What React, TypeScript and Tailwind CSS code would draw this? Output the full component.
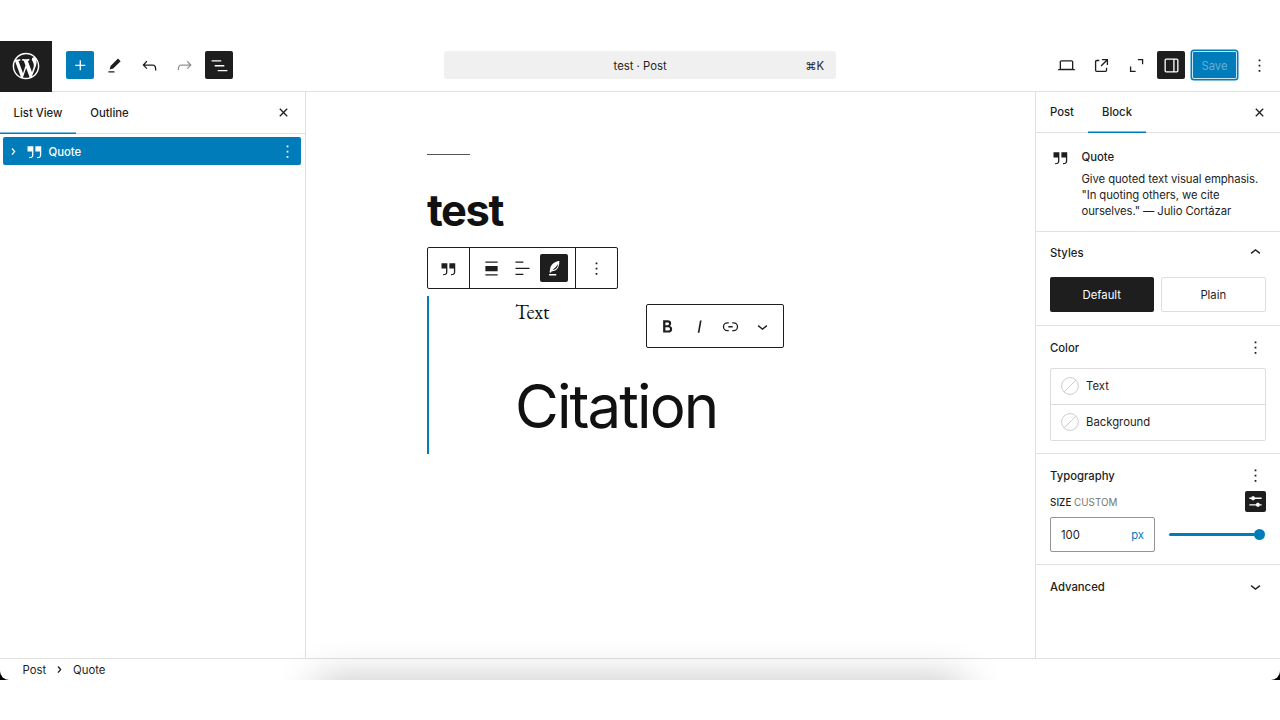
import React from 'react';

const icons = {
  wordpress:
    'M20 10c0-5.51-4.49-10-10-10C4.48 0 0 4.49 0 10c0 5.52 4.48 10 10 10 5.51 0 10-4.48 10-10zM7.78 15.37L4.37 6.22c.55-.02 1.17-.08 1.17-.08.5-.06.44-1.13-.06-1.11 0 0-1.45.11-2.37.11-.18 0-.37 0-.58-.01C4.12 2.69 6.87 1.11 10 1.11c2.33 0 4.45.87 6.05 2.34-.68-.11-1.65.39-1.65 1.58 0 .74.45 1.36.9 2.1.35.61.55 1.36.55 2.46 0 1.49-1.4 5-1.4 5l-3.03-8.37c.54-.02.82-.17.82-.17.5-.05.44-1.25-.06-1.22 0 0-1.44.12-2.38.12-.87 0-2.33-.12-2.33-.12-.5-.03-.56 1.2-.06 1.22l.92.08 1.26 3.41zM17.41 10c.24-.64.74-1.87.43-4.25.7 1.29 1.05 2.71 1.05 4.25 0 3.29-1.73 6.24-4.4 7.78.97-2.59 1.94-5.2 2.92-7.78zM6.1 18.09C3.12 16.65 1.11 13.53 1.11 10c0-1.3.23-2.48.72-3.59C3.25 10.3 4.67 14.2 6.1 18.09zm4.03-6.63l2.58 6.98c-.86.29-1.76.45-2.71.45-.79 0-1.57-.11-2.29-.33.81-2.38 1.62-4.74 2.42-7.1z',
  plus: 'M11 12.5V17.5H12.5V12.5H17.5V11H12.5V6H11V11H6V12.5H11Z',
  edit: 'm19 7-3-3-8.5 8.5-1 4 4-1L19 7Zm-7 11.5H5V20h7v-1.5Z',
  undo: 'M18.3 11.7c-.6-.6-1.4-.9-2.3-.9H6.7l2.9-3.3-1.1-1-4.5 5L8.5 16l1-1-2.7-2.7H16c.5 0 .9.2 1.3.5 1 1 1 3.4 1 4.5v.3h1.5v-.2c0-1.5 0-4.3-1.5-5.7z',
  redo: 'M15.6 6.5l-1.1 1 2.9 3.3H8c-.9 0-1.7.3-2.3.9-1.4 1.5-1.4 4.2-1.4 5.6v.2h1.5v-.3c0-1.1 0-3.5 1-4.5.3-.3.7-.5 1.3-.5h9.2L14.5 15l1.1 1.1 4.6-4.6-4.6-5z',
  listView: 'M3 6h11v1.5H3V6Zm3.5 5.5h11V13h-11v-1.5ZM21 17H10v1.5h11V17Z',
  quote:
    'M13 6v6h5.2v4c0 .8-.2 1.4-.5 1.7-.6.6-1.6.6-2.5.5h-.3v1.5h.5c1 0 2.3-.1 3.3-1 .6-.6 1-1.6 1-2.8V6H13zm-9 6h5.2v4c0 .8-.2 1.4-.5 1.7-.6.6-1.6.6-2.5.5h-.3v1.5h.5c1 0 2.3-.1 3.3-1 .6-.6 1-1.6 1-2.8V6H4v6z',
  more: 'M13 19h-2v-2h2v2zm0-6h-2v-2h2v2zm0-6h-2V5h2v2z',
  close:
    'M12 13.06l3.712 3.713 1.061-1.06L13.061 12l3.712-3.712-1.06-1.06L12 10.938 8.288 7.227l-1.061 1.06L10.939 12l-3.712 3.712 1.06 1.061L12 13.061z',
  desktop:
    'M20.5 16h-.7V8c0-1.1-.9-2-2-2H6.2c-1.1 0-2 .9-2 2v8h-.7c-.8 0-1.5.7-1.5 1.5h20c0-.8-.7-1.5-1.5-1.5zM5.7 8c0-.3.2-.5.5-.5h11.6c.3 0 .5.2.5.5v7.6H5.7V8z',
  external:
    'M19.5 4.5h-7V6h4.44l-5.97 5.97 1.06 1.06L18 7.06v4.44h1.5v-7Zm-13 1a2 2 0 0 0-2 2v10a2 2 0 0 0 2 2h10a2 2 0 0 0 2-2v-3H17v3a.5.5 0 0 1-.5.5h-10a.5.5 0 0 1-.5-.5v-10a.5.5 0 0 1 .5-.5h3V5.5h-3Z',
  expand: 'M13.5 4.5h6.2v6.2h-1.5V6h-4.7V4.5ZM4.5 13H6v5h5v1.5H4.5V13Z',
  sidebar:
    'M18 4H6c-1.1 0-2 .9-2 2v12c0 1.1.9 2 2 2h12c1.1 0 2-.9 2-2V6c0-1.1-.9-2-2-2zm-4 14.5H6c-.3 0-.5-.2-.5-.5V6c0-.3.2-.5.5-.5h8v13zm4.5-.5c0 .3-.2.5-.5.5h-2.5v-13H18c.3 0 .5.2.5.5v12z',
  alignNone: 'M19 5.5H5V4h14v1.5ZM19 20H5v-1.5h14V20ZM5 9h14v6H5V9Z',
  alignLeft: 'M13 5.5H4V4h9v1.5Zm7 7H4V11h16v1.5Zm-7 7H4V18h9v1.5Z',
  feather:
    'M17.6 3C11.6 4.2 7.2 8 7 12.8l-.7 3.6 1.5.4 1-1.7c5.6.2 8.800-3.500 8.800-12.100ZM16 6.800c-.2 4.200-2.300 6.600-6.300 6.800 1.300-1.400 4.500-3.400 6.300-6.800ZM5.800 18.300h8.200v1.700H5.800v-1.700Z',
  bold: 'M14.7 11.3c1-.6 1.5-1.6 1.5-3 0-2.3-1.3-3.4-4-3.4H7v14h5.8c1.4 0 2.5-.3 3.3-1 .8-.7 1.2-1.7 1.2-2.9.1-1.9-.8-3.1-2.6-3.7zm-5.1-4h2.3c.6 0 1.1.1 1.4.4.3.3.5.7.5 1.2s-.2 1-.5 1.2c-.3.3-.8.4-1.4.4H9.6V7.3zm4.6 9c-.4.3-1 .4-1.7.4H9.6v-3.9h2.9c.7 0 1.3.2 1.7.5.4.3.6.8.6 1.5s-.2 1.2-.6 1.5z',
  italic: 'M12.5 5L10 19h1.9l2.5-14z',
  link: 'M10 17.389H8.444A5.194 5.194 0 1 1 8.444 7H10v1.5H8.444a3.694 3.694 0 0 0 0 7.389H10v1.5ZM14 7h1.556a5.194 5.194 0 0 1 0 10.39H14v-1.5h1.556a3.694 3.694 0 0 0 0-7.39H14V7Zm-4.5 6h5v-1.5h-5V13Z',
  chevronDown: 'M17.5 11.6L12 16l-5.5-4.4.9-1.2L12 14l4.5-3.6 1 1.2z',
  chevronUp: 'M6.5 12.4L12 8l5.5 4.4-.9 1.2L12 10l-4.5 3.6-1-1.2z',
  chevronRight: 'M10.862 8.04L14.28 12.029L10.862 16.017L9.723 15.04L12.305 12.029L9.723 9.017L10.862 8.04Z',
  settings:
    'm19 7.5h-7.628c-.309-.874-1.142-1.5-2.122-1.5-.98 0-1.813.626-2.122 1.5h-2.128v1.5h2.128c.309.874 1.142 1.5 2.122 1.5.98 0 1.813-.626 2.122-1.5h7.628zM19 15h-2.128c-.309-.874-1.142-1.5-2.122-1.5s-1.813.626-2.122 1.5h-7.628v1.5h7.628c.309.874 1.142 1.5 2.122 1.5s1.813-.626 2.122-1.5h2.128z',
};

interface IconProps {
  name: keyof typeof icons;
  className?: string;
  viewBox?: string;
}

const Icon: React.FC<IconProps> = ({ name, className = 'size-[21px]', viewBox = '0 0 24 24' }) => (
  <svg viewBox={viewBox} fill="currentColor" className={`shrink-0 ${className}`}>
    <path d={icons[name]} />
  </svg>
);

interface IconButtonProps {
  name: keyof typeof icons;
  label: string;
  className?: string;
}

const IconButton: React.FC<IconButtonProps> = ({ name, label, className = '' }) => (
  <button
    type="button"
    aria-label={label}
    className={`flex size-7 shrink-0 items-center justify-center rounded-[2px] ${className}`}
  >
    <Icon name={name} />
  </button>
);

const Header = () => (
  <header className="flex h-[51px] shrink-0 items-start justify-between border-b border-[#e0e0e0]">
    <div className="flex">
      <div className="-mb-px mr-3.5 flex h-[51px] w-[52px] items-center justify-center bg-[#1e1e1e] pb-px text-white">
        <Icon name="wordpress" viewBox="-2 -2 24 24" className="size-[32px]" />
      </div>
      <div className="flex gap-[6.8px] pt-2.5">
        <IconButton name="plus" label="Add block" className="bg-[#007cba] text-white" />
        <IconButton name="edit" label="Tools" />
        <IconButton name="undo" label="Undo" />
        <IconButton name="redo" label="Redo" className="text-[#949494]" />
        <IconButton name="listView" label="Document overview" className="bg-[#1e1e1e] text-white" />
      </div>
    </div>

    <div className="-ml-[5px] mt-2.5 grid h-7 w-[392px] grid-cols-[1fr_auto_1fr] items-center rounded-[3px] bg-[#f0f0f0] px-3 pt-px">
      <span />
      <span>test · Post</span>
      <span className="text-right">⌘K</span>
    </div>

    <div className="flex items-center gap-[7px] pr-[7px] pt-2.5">
      <IconButton name="desktop" label="Preview" />
      <IconButton name="external" label="View post" />
      <IconButton name="expand" label="Zoom out" />
      <IconButton name="sidebar" label="Settings" className="bg-[#1e1e1e] text-white" />
      <button
        type="button"
        className="mr-px flex h-7 w-[45px] items-center justify-center rounded-[2px] bg-[#007cba] pt-px text-[#66b0d6] shadow-[inset_0_0_0_1px_#ffffffcc] ring-[1.5px] ring-[#007cba]"
      >
        Save
      </button>
      <IconButton name="more" label="Options" />
    </div>
  </header>
);

const ListViewPanel = () => (
  <aside className="flex w-[306px] shrink-0 flex-col border-r border-[#e0e0e0]">
    <div className="flex h-[42px] items-center justify-between border-b border-[#e0e0e0] pr-[8px] font-medium">
      <div className="flex h-[42px]">
        <button type="button" className="w-[76px] pt-px shadow-[inset_0_-1.5px_0_#007cba]">List View</button>
        <button type="button" className="w-[67px] pt-px">Outline</button>
      </div>
      <IconButton name="close" label="Close" />
    </div>
    <div className="mx-[3px] mt-[3px] flex h-[28px] w-[298px] items-center rounded-[2px] bg-[#007cba] font-medium text-white">
      <Icon name="chevronRight" />
      <Icon name="quote" className="size-[21px]" />
      <span className="ml-[3.5px] flex-1 pt-px">Quote</span>
      <Icon name="more" className="mr-[3px] size-[21px]" />
    </div>
  </aside>
);

const Canvas = () => (
  <main className="flex-1 pl-[121px] pt-[62px] text-[#111]">
    <div className="h-px w-[43px] bg-[#555]" />
    <h1 className="mt-[28px] text-[43.5px] font-bold leading-[54px] tracking-[-1.4px]">test</h1>

    <div className="mt-[10px] flex h-[42px] w-[191px] rounded-[2px] border border-[#1e1e1e] text-[#1e1e1e]">
      <div className="flex w-[42px] items-center justify-center border-r border-[#1e1e1e]">
        <Icon name="quote" />
      </div>
      <div className="flex flex-1 items-center justify-center gap-[3.5px] border-r border-[#1e1e1e]">
        <IconButton name="alignNone" label="Align" />
        <IconButton name="alignLeft" label="Align text" />
        <IconButton name="feather" label="Edit citation" className="bg-[#1e1e1e] text-white" />
      </div>
      <div className="flex w-[41px] items-center justify-center">
        <Icon name="more" />
      </div>
    </div>

    <blockquote className="mt-[7px] h-[158px] border-l-2 border-[#007cba] pl-[86px]">
      <div className="flex">
        <p className="w-[131px] pt-[4px] font-['EB_Garamond','Liberation_Serif',serif] text-[20.5px] leading-6">Text</p>
        <div className="mt-[8px] flex h-[44px] w-[138px] items-center justify-center gap-[3.4px] rounded-[2px] border border-[#1e1e1e] text-[#1e1e1e]">
          <IconButton name="bold" label="Bold" />
          <IconButton name="italic" label="Italic" />
          <IconButton name="link" label="Link" />
          <IconButton name="chevronDown" label="More" />
        </div>
      </div>
      <cite className="mt-[22px] block text-[60px] not-italic leading-[72px] tracking-[-1.9px]">Citation</cite>
    </blockquote>
  </main>
);

const colorRows = ['Text', 'Background'];

const BlockSettings = () => (
  <aside className="w-[245px] shrink-0 border-l border-[#e0e0e0]">
    <div className="flex h-[41px] items-center justify-between border-b border-[#e0e0e0] pr-[7px] font-medium">
      <div className="flex h-[41px]">
        <button type="button" className="w-[52px]">Post</button>
        <button type="button" className="w-[58px] shadow-[inset_0_-1.5px_0_#007cba]">Block</button>
      </div>
      <IconButton name="close" label="Close settings" />
    </div>

    <section className="flex h-[99px] gap-[10.5px] border-b border-[#e0e0e0] pl-[14px] pt-[14px]">
      <Icon name="quote" />
      <div className="pt-[2px]">
        <h2 className="font-medium leading-4">Quote</h2>
        <p className="mt-[6px] whitespace-nowrap leading-4 tracking-[-0.08px]">
          Give quoted text visual emphasis.
          <br />
          "In quoting others, we cite
          <br />
          ourselves." — Julio Cortázar
        </p>
      </div>
    </section>

    <section className="h-[94px] border-b border-[#e0e0e0] px-[14px] pt-[10px]">
      <div className="flex items-center justify-between">
        <h2 className="font-medium">Styles</h2>
        <Icon name="chevronUp" />
      </div>
      <div className="mt-[14px] flex gap-[7px]">
        <button type="button" className="h-[35px] flex-1 rounded-[2px] bg-[#1e1e1e] text-white">Default</button>
        <button type="button" className="h-[35px] flex-1 rounded-[2px] border border-[#ddd]">Plain</button>
      </div>
    </section>

    <section className="h-[128px] border-b border-[#e0e0e0] px-[14px] pt-[11px]">
      <div className="flex items-center justify-between">
        <h2 className="font-medium">Color</h2>
        <Icon name="more" />
      </div>
      <div className="mt-[10px] divide-y divide-[#ddd] rounded-[2px] border border-[#ddd]">
        {colorRows.map((row) => (
          <div key={row} className="flex h-[35.5px] items-center gap-[7px] pl-[10px]">
            <svg viewBox="0 0 18 18" className="size-[18px]" fill="none" stroke="#ccc">
              <circle cx="9" cy="9" r="8.4" />
              <path d="M3.2 14.8 14.8 3.2" />
            </svg>
            <span>{row}</span>
          </div>
        ))}
      </div>
    </section>

    <section className="h-[111px] border-b border-[#e0e0e0] px-[14px] pt-[11px]">
      <div className="flex items-center justify-between">
        <h2 className="font-medium">Typography</h2>
        <Icon name="more" />
      </div>
      <div className="mt-[5px] flex items-center justify-between">
        <span className="pt-[2px] text-[9.8px] font-medium tracking-[0.05px]">
          SIZE <span className="font-normal text-[#757575]">CUSTOM</span>
        </span>
        <div className="flex size-[21px] items-center justify-center rounded-[2px] bg-[#1e1e1e] text-white">
          <Icon name="settings" />
        </div>
      </div>
      <div className="mt-[5px] flex items-center">
        <div className="flex h-[35px] w-[105px] items-center justify-between rounded-[2px] border border-[#949494] px-[10px]">
          <span>100</span>
          <span className="text-[#007cba]">px</span>
        </div>
        <div className="ml-[13.5px] flex items-center">
          <div className="h-[3.5px] w-[86px] rounded-full bg-[#007cba]" />
          <div className="-ml-px size-[11px] rounded-full bg-[#007cba]" />
        </div>
      </div>
    </section>

    <section className="flex items-center justify-between px-[14px] pt-[11px]">
      <h2 className="font-medium">Advanced</h2>
      <Icon name="chevronDown" />
    </section>
  </aside>
);

export default function App() {
  return (
    <div className="h-[720px] w-[1280px] overflow-hidden bg-white pt-[41px] font-['Inter','Noto_Sans_CJK_SC',sans-serif] text-[11.3px] leading-4 text-[#1e1e1e]">
      <div className="h-[639px] bg-gradient-to-b from-white from-50% to-black to-50%">
        <div className="relative flex h-[639px] flex-col overflow-hidden rounded-b-[9px] bg-white">
          <Header />
          <div className="flex min-h-0 flex-1">
            <ListViewPanel />
            <Canvas />
            <BlockSettings />
          </div>
          <footer className="flex h-[22px] shrink-0 items-center border-t border-[#e0e0e0] pl-[22.5px]">
            <span>Post</span>
            <Icon name="chevronRight" className="mx-[3px] size-[21px]" />
            <span>Quote</span>
          </footer>
          {/* soft shadow rising from the bottom edge */}
          <div className="pointer-events-none absolute left-[316px] top-[639px] h-16 w-[648px] shadow-[0_0_40px_0_rgba(0,0,0,0.24)]" />
        </div>
      </div>
    </div>
  );
}
